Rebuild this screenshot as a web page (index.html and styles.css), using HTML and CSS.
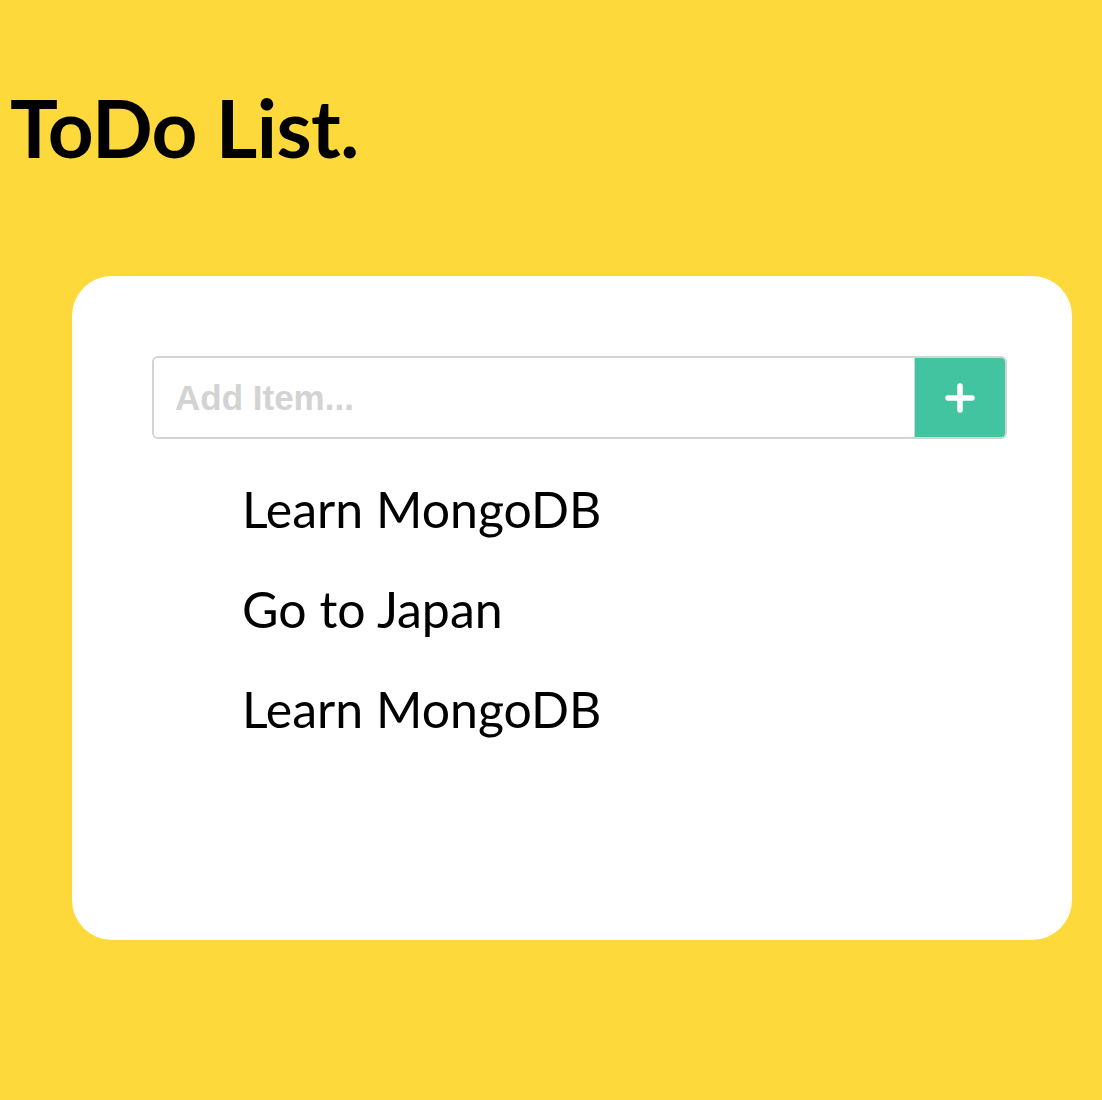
FILE: index.html
```html
<!DOCTYPE html>
<html>
<head>
<meta charset="utf-8">
<link rel="stylesheet" href="styles.css">
</head>
<body>
<h1 class="title">ToDo List.</h1>
<div class="card">
  <form class="add-form">
    <input class="add-input" type="text" placeholder="Add Item...">
    <button class="add-btn" type="button" aria-label="Add">
      <svg width="32" height="32" viewBox="0 0 32 32"><path d="M16 4V28M4 16H28" stroke="#fff" stroke-width="5.5" stroke-linecap="round" fill="none"/></svg>
    </button>
  </form>
  <ul class="items">
    <li class="item">Learn MongoDB</li>
    <li class="item">Go to Japan</li>
    <li class="item">Learn MongoDB</li>
  </ul>
</div>
</body>
</html>
```
FILE: styles.css
```css
html, body {
  margin: 0;
  padding: 0;
  background: #fdd93b;
  font-family: Lato, "Open Sans", sans-serif;
}
.title {
  margin: 0;
  padding: 79px 0 0 10px;
  font-size: 80px;
  line-height: 96px;
  font-weight: 700;
  color: #000;
  letter-spacing: -0.6px;
}
.card {
  margin: 101px 0 0 72px;
  width: 1000px;
  height: 664px;
  box-sizing: border-box;
  background: #fff;
  border-radius: 40px;
  padding: 80px 65px 0 80px;
}
.add-form {
  display: flex;
  height: 83px;
  box-sizing: border-box;
  border: 2px solid #d4d4d4;
  border-radius: 6px;
  overflow: hidden;
}
.add-input {
  flex: 1;
  border: none;
  outline: none;
  padding: 0 0 0 21px;
  font-family: "Liberation Sans", Arial, sans-serif;
  font-size: 35px;
  font-weight: 700;
  color: #333;
}
.add-input::placeholder {
  color: #d3d3d3;
}
.add-btn {
  width: 91px;
  border: none;
  border-left: 1px solid #d4d4d4;
  background: #42c4a0;
  display: flex;
  align-items: center;
  justify-content: center;
  padding: 0;
  margin: 0;
}
.add-btn svg {
  display: block;
}
.items {
  list-style: none;
  margin: 20px 0 0 0;
  padding: 0 0 0 90px;
}
.item {
  font-size: 50px;
  line-height: 100px;
  color: #000;
}
```
